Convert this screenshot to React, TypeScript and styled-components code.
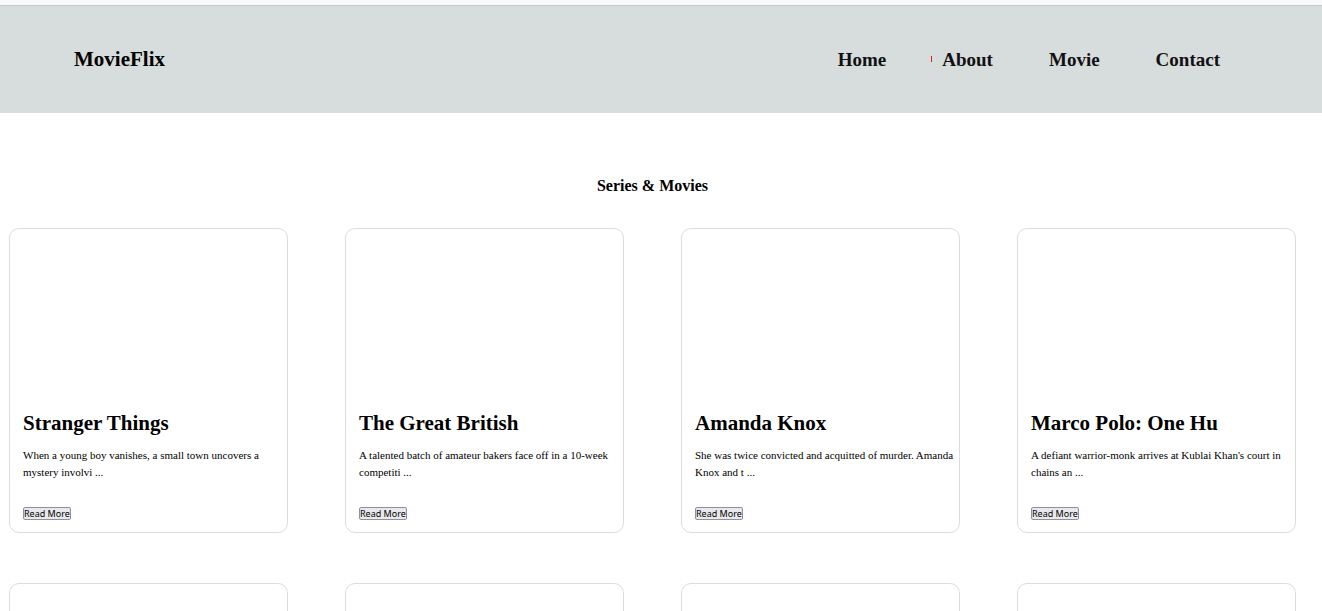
import React from "react";
import styled, { createGlobalStyle } from "styled-components";

const GlobalStyle = createGlobalStyle`
  * { box-sizing: border-box; }
  body {
    margin: 0;
    background: #fff;
    color: #000;
    font-family: "Liberation Serif", "Times New Roman", serif;
  }
`;

const Page = styled.div`
  height: 100vh;
  overflow-y: auto;
  scrollbar-width: none;
`;

const TopStrip = styled.div`
  height: 6px;
  background: #f9fafc;
  border-bottom: 1px solid #c4c8c9;
`;

const Header = styled.header`
  display: flex;
  align-items: baseline;
  justify-content: space-between;
  padding: 41px 102px 42px 74px;
  background: #d7dcdc;
`;

const Brand = styled.a`
  color: #000;
  font-size: 21px;
  line-height: 24px;
  font-weight: 700;
  text-decoration: none;
`;

const Nav = styled.nav`
  display: flex;
  gap: 56px;
`;

const NavLink = styled.a<{ $marked?: boolean }>`
  position: relative;
  color: #111;
  font-size: 19px;
  line-height: 22px;
  font-weight: 700;
  text-decoration: none;

  &::before {
    content: "";
    display: ${(p) => (p.$marked ? "block" : "none")};
    position: absolute;
    top: 7px;
    left: -11px;
    width: 1px;
    height: 6px;
    background: #d81e1e;
  }
`;

const Main = styled.main`
  padding: 64px 26px 50px 9px;
`;

const SectionTitle = styled.h2`
  margin: 0 0 33px;
  font-size: 16px;
  line-height: 18px;
  text-align: center;
`;

const CardGrid = styled.div`
  display: grid;
  grid-template-columns: repeat(4, 1fr);
  gap: 50px 57px;
`;

const Card = styled.article`
  min-height: 305px;
  padding: 0 4px 12px 13px;
  border: 1px solid #dcdcdc;
  border-radius: 10px;
`;

const Poster = styled.div`
  height: 182px;
`;

const CardTitle = styled.h3`
  margin: 0 0 12px;
  font-size: 21px;
  line-height: 24px;
`;

const Summary = styled.p`
  margin: 0 0 26px;
  font-size: 11px;
  line-height: 17px;
`;

const ReadMore = styled.button`
  display: block;
  padding: 0;
  border: 1px solid #8f8f9d;
  border-radius: 2px;
  background: #e9e9ed;
  color: #000;
  font-family: "Noto Sans", "Open Sans", sans-serif;
  font-size: 9px;
  line-height: 11px;
`;

const movies = [
  { title: "Stranger Things", summary: "When a young boy vanishes, a small town uncovers a mystery involvi ..." },
  { title: "The Great British", summary: "A talented batch of amateur bakers face off in a 10-week competiti ..." },
  { title: "Amanda Knox", summary: "She was twice convicted and acquitted of murder. Amanda Knox and t ..." },
  { title: "Marco Polo: One Hu", summary: "A defiant warrior-monk arrives at Kublai Khan's court in chains an ..." },
];

const upcoming = [1, 2, 3, 4];

export default function App() {
  return (
    <Page>
      <GlobalStyle />
      <TopStrip />
      <Header>
        <Brand href="#">MovieFlix</Brand>
        <Nav>
          <NavLink href="#home">Home</NavLink>
          <NavLink href="#about" $marked>About</NavLink>
          <NavLink href="#movie">Movie</NavLink>
          <NavLink href="#contact">Contact</NavLink>
        </Nav>
      </Header>
      <Main>
        <SectionTitle>Series &amp; Movies</SectionTitle>
        <CardGrid>
          {movies.map((movie) => (
            <Card key={movie.title}>
              <Poster />
              <CardTitle>{movie.title}</CardTitle>
              <Summary>{movie.summary}</Summary>
              <ReadMore type="button">Read More</ReadMore>
            </Card>
          ))}
          {upcoming.map((slot) => (
            <Card key={slot} />
          ))}
        </CardGrid>
      </Main>
    </Page>
  );
}
